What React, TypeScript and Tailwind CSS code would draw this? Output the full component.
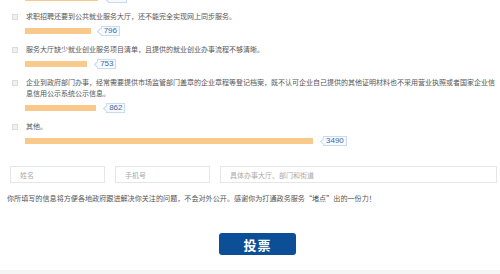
import React from "react";

interface VoteItem {
  text: string;
  votes: number;
}

const MAX_VOTES = 3490;
const MAX_BAR = 288;

const items: VoteItem[] = [
  { text: "求职招聘还要到公共就业服务大厅，还不能完全实现网上同步服务。", votes: 796 },
  { text: "服务大厅缺少就业创业服务项目清单，且提供的就业创业办事流程不够清晰。", votes: 753 },
  {
    text: "企业到政府部门办事，经常需要提供市场监管部门盖章的企业章程等登记档案，既不认可企业自己提供的其他证明材料也不采用营业执照或者国家企业信息信用公示系统公示信息。",
    votes: 862,
  },
  { text: "其他。", votes: 3490 },
];

const VoteBar = ({ votes }: { votes: number }) => {
  const width = (votes / MAX_VOTES) * MAX_BAR;
  return (
    <div className="flex items-center h-[10px] pl-[13px]">
      <div className="h-[6px] bg-[#f9c98b]" style={{ width }} />
      <div className="relative ml-[10px] h-[10px] flex items-center border border-[#c9dbee] bg-[#f6f9fd] px-[2px]">
        <span className="absolute left-[-3.5px] top-[2px] w-[5px] h-[5px] rotate-45 border-l border-b border-[#c9dbee] bg-[#f6f9fd]" />
        <span className="relative text-[8px] leading-none text-[#3a6ca6] font-['Liberation_Sans',sans-serif]">
          {votes}
        </span>
      </div>
    </div>
  );
};

export default function App() {
  return (
    <div className="w-[500px] h-[274px] overflow-hidden bg-white flex flex-col font-['Noto_Sans_CJK_SC',sans-serif]">
      {/* Options */}
      <div className="flex flex-col gap-[8px] pl-[12px] pr-[4px] mt-[-7px]">
        <VoteBar votes={883} />
        {items.map((item) => (
          <div key={item.votes} className="flex flex-col gap-[4px]">
            <div className="flex items-start gap-[8px]">
              <span className="mt-[2.5px] w-[6px] h-[6px] shrink-0 border border-[#dcdcdc] bg-[#f0f0f0]" />
              <p className="text-[7px] leading-[11px] text-[#555]">{item.text}</p>
            </div>
            <VoteBar votes={item.votes} />
          </div>
        ))}
      </div>

      {/* Contact fields */}
      <div className="flex gap-[10px] pl-[10px] pr-[3px] mt-[20px]">
        {["姓名", "手机号", "具体办事大厅、部门和街道"].map((ph, i) => (
          <input
            key={ph}
            placeholder={ph}
            className={`${i < 2 ? "w-[95px]" : "flex-1"} h-[17px] border border-[#e6e6e6] px-[9px] text-[7px] text-[#555] placeholder:text-[#aaa] outline-none`}
          />
        ))}
      </div>

      <p className="mt-[9px] pl-[7px] text-[7.1px] leading-[12px] text-[#555]">
        你所填写的信息将方便各地政府跟进解决你关注的问题，不会对外公开。感谢你为打通政务服务“堵点”出的一份力！
      </p>

      <button className="mt-[29px] ml-[219px] w-[77px] h-[22px] rounded-[3px] bg-[#0c4f96] text-white text-[13px] font-bold leading-none tracking-[1px]">
        投票
      </button>

      <div className="mt-[15px] flex-1 bg-[#f5f5f5]" />
    </div>
  );
}
